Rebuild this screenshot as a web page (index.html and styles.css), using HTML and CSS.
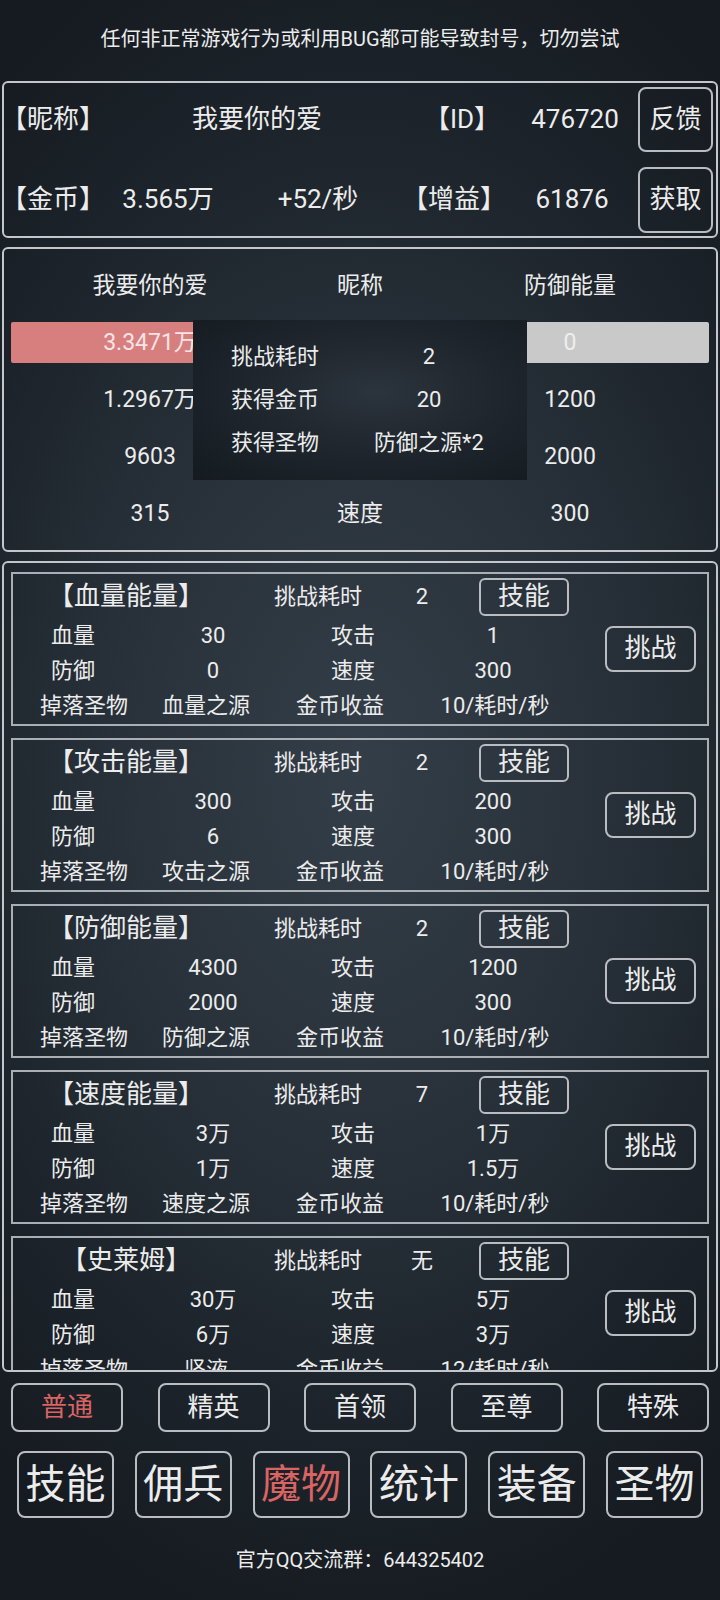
FILE: index.html
```html
<!DOCTYPE html>
<html lang="zh-CN">
  <head>
    <meta charset="UTF-8" />
    <meta name="viewport" content="width=device-width, initial-scale=1.0" />
    <title>魔物</title>
    <link rel="stylesheet" href="styles.css">
  </head>
  <body>
    <div class="notice">任何非正常游戏行为或利用BUG都可能导致封号，切勿尝试</div>

    <!-- Player info -->
    <div class="panel info-panel">
      <div class="info-row">
        <div class="info-grid row-name">
          <span class="br">【昵称】</span>
          <span>我要你的爱</span>
          <span class="br">【ID】</span>
          <span>476720</span>
        </div>
        <button class="btn info-btn">反馈</button>
      </div>
      <div class="info-row second">
        <div class="info-grid row-gold">
          <span class="br">【金币】</span>
          <span>3.565万</span>
          <span>+52/秒</span>
          <span class="br">【增益】</span>
          <span>61876</span>
        </div>
        <button class="btn info-btn">获取</button>
      </div>
    </div>

    <!-- Battle compare -->
    <div class="panel battle-panel">
      <div class="battle-row">
        <span>我要你的爱</span><span>昵称</span><span>防御能量</span>
      </div>
      <div class="battle-row bars">
        <div class="bar bar-red">3.3471万</div>
        <div class="bar bar-grey">0</div>
      </div>
      <div class="battle-row">
        <span>1.2967万</span><span></span><span>1200</span>
      </div>
      <div class="battle-row">
        <span>9603</span><span></span><span>2000</span>
      </div>
      <div class="battle-row">
        <span>315</span><span>速度</span><span>300</span>
      </div>

      <!-- Result popup -->
      <div class="result">
        <div class="result-row"><span>挑战耗时</span><span>2</span></div>
        <div class="result-row"><span>获得金币</span><span>20</span></div>
        <div class="result-row"><span>获得圣物</span><span>防御之源*2</span></div>
      </div>
    </div>

    <!-- Monster list -->
    <div class="panel monster-panel">
      <div class="card">
        <div class="card-body">
          <div class="card-head">
            <span class="br card-name">【血量能量】</span>
            <span>挑战耗时</span>
            <span>2</span>
            <button class="btn skill-btn">技能</button>
          </div>
          <div class="stat-row"><span>血量</span><span>30</span><span>攻击</span><span>1</span></div>
          <div class="stat-row"><span>防御</span><span>0</span><span>速度</span><span>300</span></div>
          <div class="drop-row"><span>掉落圣物</span><span>血量之源</span><span>金币收益</span><span>10/耗时/秒</span></div>
        </div>
        <button class="btn fight-btn">挑战</button>
      </div>

      <div class="card">
        <div class="card-body">
          <div class="card-head">
            <span class="br card-name">【攻击能量】</span>
            <span>挑战耗时</span>
            <span>2</span>
            <button class="btn skill-btn">技能</button>
          </div>
          <div class="stat-row"><span>血量</span><span>300</span><span>攻击</span><span>200</span></div>
          <div class="stat-row"><span>防御</span><span>6</span><span>速度</span><span>300</span></div>
          <div class="drop-row"><span>掉落圣物</span><span>攻击之源</span><span>金币收益</span><span>10/耗时/秒</span></div>
        </div>
        <button class="btn fight-btn">挑战</button>
      </div>

      <div class="card">
        <div class="card-body">
          <div class="card-head">
            <span class="br card-name">【防御能量】</span>
            <span>挑战耗时</span>
            <span>2</span>
            <button class="btn skill-btn">技能</button>
          </div>
          <div class="stat-row"><span>血量</span><span>4300</span><span>攻击</span><span>1200</span></div>
          <div class="stat-row"><span>防御</span><span>2000</span><span>速度</span><span>300</span></div>
          <div class="drop-row"><span>掉落圣物</span><span>防御之源</span><span>金币收益</span><span>10/耗时/秒</span></div>
        </div>
        <button class="btn fight-btn">挑战</button>
      </div>

      <div class="card">
        <div class="card-body">
          <div class="card-head">
            <span class="br card-name">【速度能量】</span>
            <span>挑战耗时</span>
            <span>7</span>
            <button class="btn skill-btn">技能</button>
          </div>
          <div class="stat-row"><span>血量</span><span>3万</span><span>攻击</span><span>1万</span></div>
          <div class="stat-row"><span>防御</span><span>1万</span><span>速度</span><span>1.5万</span></div>
          <div class="drop-row"><span>掉落圣物</span><span>速度之源</span><span>金币收益</span><span>10/耗时/秒</span></div>
        </div>
        <button class="btn fight-btn">挑战</button>
      </div>

      <div class="card">
        <div class="card-body">
          <div class="card-head">
            <span class="br card-name">【史莱姆】</span>
            <span>挑战耗时</span>
            <span>无</span>
            <button class="btn skill-btn">技能</button>
          </div>
          <div class="stat-row"><span>血量</span><span>30万</span><span>攻击</span><span>5万</span></div>
          <div class="stat-row"><span>防御</span><span>6万</span><span>速度</span><span>3万</span></div>
          <div class="drop-row"><span>掉落圣物</span><span>坚液</span><span>金币收益</span><span>12/耗时/秒</span></div>
        </div>
        <button class="btn fight-btn">挑战</button>
      </div>
    </div>

    <!-- Difficulty tabs -->
    <div class="tabs">
      <button class="btn tab active">普通</button>
      <button class="btn tab">精英</button>
      <button class="btn tab">首领</button>
      <button class="btn tab">至尊</button>
      <button class="btn tab">特殊</button>
    </div>

    <!-- Main navigation -->
    <div class="nav">
      <button class="btn nav-btn">技能</button>
      <button class="btn nav-btn">佣兵</button>
      <button class="btn nav-btn active">魔物</button>
      <button class="btn nav-btn">统计</button>
      <button class="btn nav-btn">装备</button>
      <button class="btn nav-btn">圣物</button>
    </div>

    <div class="footer">官方QQ交流群：644325402</div>
  </body>
</html>
```

FILE: styles.css
```css
html {
  background: #181e24;
}

body {
  width: 720px;
  min-height: 1600px;
  margin: 0;
  font-family: Roboto, "Noto Sans CJK SC", sans-serif;
  line-height: 1.2;
  color: #ececec;
  background: radial-gradient(
    ellipse 80% 55% at 50% 48%,
    #343e48 0%,
    #29323b 40%,
    #1c232a 75%,
    #161b21 100%
  );
}

/* half width brackets 【】 */
.br {
  font-feature-settings: "halt";
}

.notice {
  height: 78px;
  margin-bottom: 3px;
  display: flex;
  align-items: center;
  justify-content: center;
  font-size: 20px;
}

.panel {
  margin: 0 2px;
  border: 2px solid #c3c7cb;
  border-radius: 6px;
  box-sizing: border-box;
}

.btn {
  font-family: inherit;
  line-height: 1.2;
  color: #ececec;
  background: transparent;
  border: 2px solid #b9bdc1;
  border-radius: 8px;
  padding: 0;
  box-sizing: border-box;
  cursor: pointer;
}

/* Player info */
.info-panel {
  height: 157px;
  padding: 4px 3px 3px 0;
}

.info-row {
  display: flex;
  align-items: center;
  height: 65px;
}

.info-row.second {
  height: 66px;
  margin-top: 15px;
}

.info-grid {
  display: grid;
  align-items: center;
  font-size: 26px;
  text-align: center;
  white-space: nowrap;
}

.row-name {
  grid-template-columns: 98px 310px 100px 126px;
}

.row-gold {
  grid-template-columns: 98px 132px 168px 104px 132px;
}

.info-btn {
  width: 76px;
  height: 100%;
  font-size: 26px;
}

/* Battle compare */
.battle-panel {
  position: relative;
  height: 305px;
  margin-top: 9px;
  padding: 8px 0;
}

.battle-row {
  display: grid;
  grid-template-columns: 210px 210px 210px;
  padding-left: 41px;
  height: 57px;
  align-items: center;
  text-align: center;
  font-size: 23px;
}

.battle-row.bars {
  display: flex;
  justify-content: space-between;
  padding: 0 7px;
}

.bar {
  width: 278px;
  height: 41px;
  line-height: 41px;
  border-radius: 2px;
}

.bar-red {
  background-color: #d77f7f;
  color: #f6e4e4;
}

.bar-grey {
  background-color: #c9c9c9;
  color: #eeeeee;
}

.result {
  position: absolute;
  left: 189px;
  top: 71px;
  width: 334px;
  height: 160px;
  box-sizing: border-box;
  padding-top: 16px;
  background: radial-gradient(
    ellipse at 55% 45%,
    #2b333c 0%,
    #1d242b 55%,
    #141a20 100%
  );
}

.result-row {
  display: grid;
  grid-template-columns: 164px 144px;
  height: 43px;
  align-items: center;
  text-align: center;
  font-size: 22px;
  white-space: nowrap;
}

/* Monster list */
.monster-panel {
  height: 811px;
  margin-top: 9px;
  padding: 9px 7px;
  overflow: hidden;
}

.card {
  display: flex;
  align-items: center;
  height: 154px;
  margin-bottom: 12px;
  border: 2px solid #a9afb4;
  box-sizing: border-box;
}

.card-body {
  width: 592px;
  align-self: stretch;
  padding-top: 4px;
  font-size: 22px;
  white-space: nowrap;
}

.card-head {
  display: grid;
  grid-template-columns: 226px 158px 50px 32px 90px;
  height: 38px;
  margin-bottom: 3px;
  align-items: center;
  text-align: center;
}

.card-name {
  font-size: 26px;
}

.skill-btn {
  grid-column: 5;
  width: 90px;
  height: 38px;
  font-size: 26px;
  border-radius: 6px;
}

.stat-row,
.drop-row {
  display: grid;
  height: 35px;
  align-items: center;
  text-align: center;
}

.stat-row {
  grid-template-columns: 120px 160px 120px 160px;
}

.drop-row {
  grid-template-columns: 142px 102px 166px 144px;
}

.fight-btn {
  width: 91px;
  height: 46px;
  font-size: 26px;
}

/* Difficulty tabs */
.tabs {
  display: flex;
  justify-content: space-between;
  margin: 11px 11px 0;
}

.tab {
  width: 112px;
  height: 49px;
  font-size: 26px;
}

.active {
  color: #da6464;
}

/* Main navigation */
.nav {
  display: flex;
  justify-content: space-between;
  margin: 19px 17px 0;
}

.nav-btn {
  width: 97px;
  height: 67px;
  font-size: 40px;
}

.footer {
  margin-top: 28px;
  line-height: 28px;
  text-align: center;
  font-size: 20px;
}
```
